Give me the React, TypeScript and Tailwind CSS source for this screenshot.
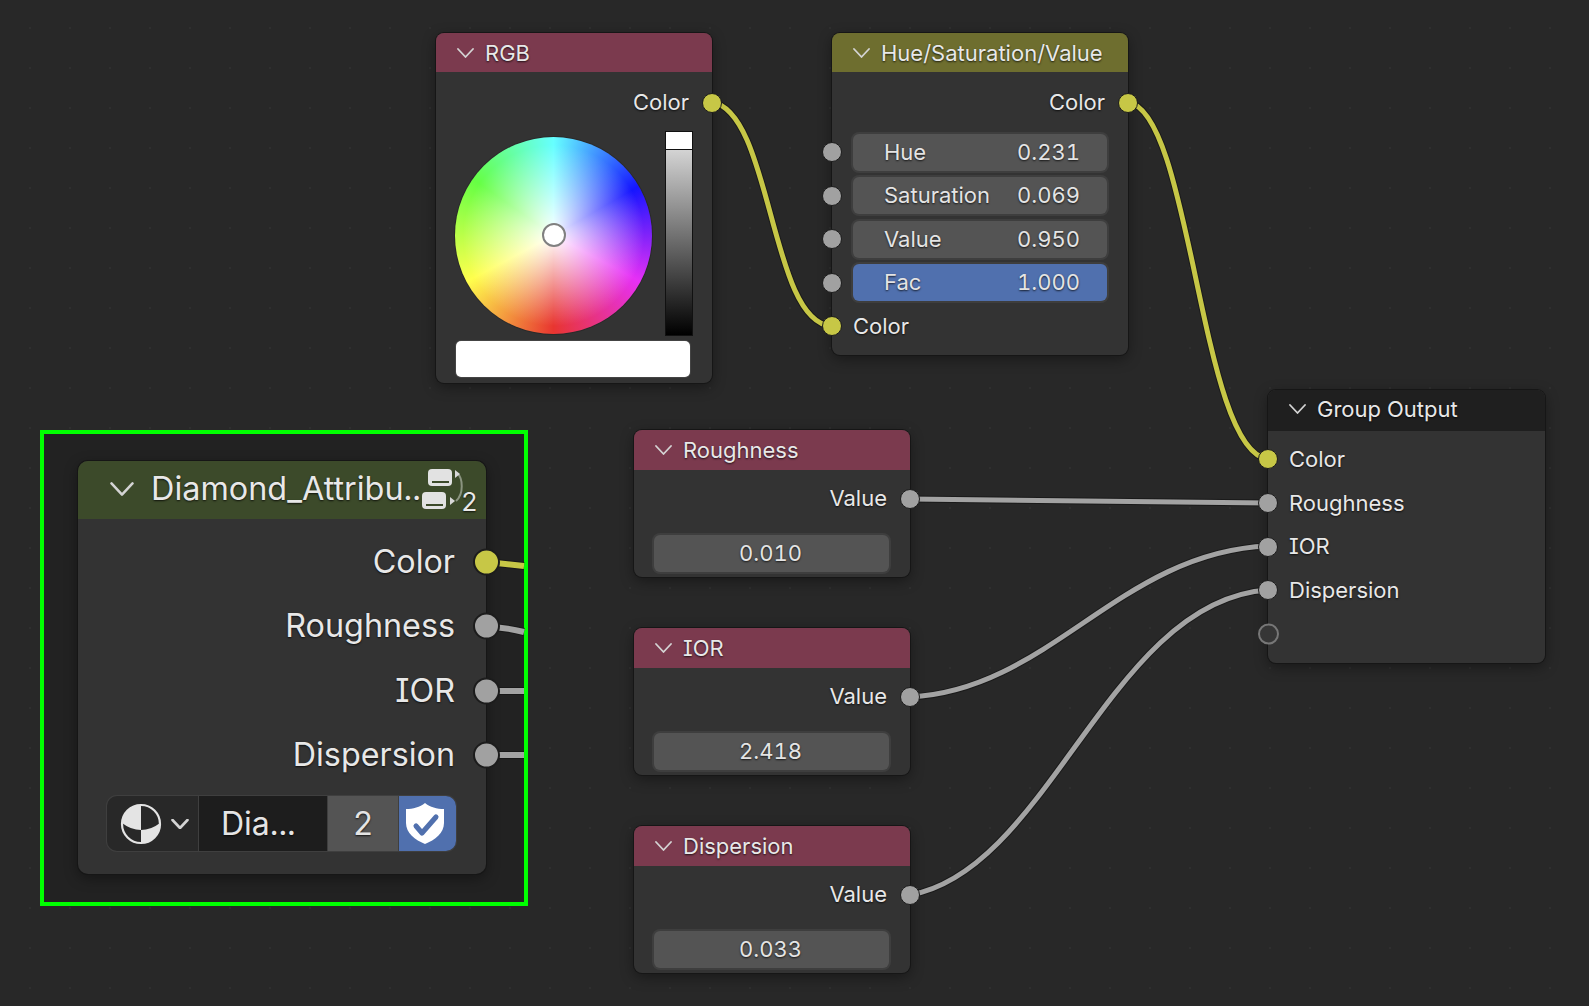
import React from 'react';

const textShadow = '[text-shadow:0_1px_2px_rgba(0,0,0,0.75)]';

function Chevron({ className, weight = 1.8 }: { className: string; weight?: number }) {
  return (
    <svg viewBox="0 0 17 10" fill="none" className={className}>
      <polyline points="1,1 8.5,9 16,1" stroke="#d4d4d4" strokeWidth={weight} strokeLinecap="round" strokeLinejoin="round" />
    </svg>
  );
}

function Socket({ side, yellow, big, empty }: { side: 'left' | 'right'; yellow?: boolean; big?: boolean; empty?: boolean }) {
  const pos = big
    ? 'w-[27px] h-[27px] -right-[14px] border-2 border-[#1c1c1c]'
    : side === 'left'
      ? 'w-[20px] h-[20px] -left-[10px] border border-[#1c1c1c]'
      : 'w-[20px] h-[20px] -right-[10px] border border-[#1c1c1c]';
  if (empty) {
    return <span className="absolute top-1/2 -left-[10px] -translate-y-1/2 w-[21px] h-[21px] rounded-full border-2 border-[#777777] bg-[#363636]" />;
  }
  return <span className={`absolute top-1/2 -translate-y-1/2 rounded-full ${pos} ${yellow ? 'bg-[#c7c746]' : 'bg-[#a1a1a1]'}`} />;
}

function Header({ title, className }: { title: string; className: string }) {
  return (
    <div className={`flex items-center pl-[21px] gap-[11px] rounded-t-[8px] ${className}`}>
      <Chevron className="w-[17px] h-[10px] shrink-0" />
      <span className={`text-[22px] leading-none text-[#e8e8e8] ${textShadow}`}>{title}</span>
    </div>
  );
}

function OutputRow({ label, yellow }: { label: string; yellow?: boolean }) {
  return (
    <div className={`relative flex items-center justify-end h-[43.5px] pr-[23px] text-[22px] text-[#e8e8e8] ${textShadow}`}>
      {label}
      <Socket side="right" yellow={yellow} />
    </div>
  );
}

function InputRow({ label, yellow, empty }: { label?: string; yellow?: boolean; empty?: boolean }) {
  return (
    <div className={`relative flex items-center h-[43.7px] pl-[21px] text-[22px] text-[#e8e8e8] ${textShadow}`}>
      {label}
      <Socket side="left" yellow={yellow} empty={empty} />
    </div>
  );
}

function SliderRow({ label, value, active }: { label: string; value: string; active?: boolean }) {
  return (
    <div className="relative flex items-center h-[43.5px] pl-[21px] pr-[21px]">
      <Socket side="left" />
      <div
        className={`flex items-center justify-between w-full h-[37px] pl-[31px] pr-[27px] rounded-[6px] text-[22px] text-[#e4e4e4] shadow-[0_0_0_2px_#3e3e3e] ${textShadow} ${
          active ? 'bg-[#5070ae]' : 'bg-[#545454]'
        }`}
      >
        <span>{label}</span>
        <span>{value}</span>
      </div>
    </div>
  );
}

function ValueNode({ title, value, className }: { title: string; value: string; className: string }) {
  return (
    <div className={`absolute left-[634px] w-[276px] h-[147px] rounded-[8px] bg-[#333333] shadow-[0_0_0_1px_#161616,0_4px_14px_rgba(0,0,0,0.4)] ${className}`}>
      <Header title={title} className="h-[40px] pb-[1px] bg-[#7b3a4e]" />
      <div className="pt-[7px]">
        <OutputRow label="Value" />
      </div>
      <div className={`flex items-center justify-center h-[37px] mt-[14px] ml-[20px] mr-[21px] pr-[2px] rounded-[6px] bg-[#545454] text-[22px] text-[#e4e4e4] shadow-[0_0_0_2px_#3e3e3e] ${textShadow}`}>
        {value}
      </div>
    </div>
  );
}

function BigOutput({ label, yellow }: { label: string; yellow?: boolean }) {
  return (
    <div className={`relative flex items-center justify-end h-[64.3px] pr-[31px] text-[32.3px] text-[#e8e8e8] ${textShadow}`}>
      {label}
      <Socket side="right" yellow={yellow} big />
    </div>
  );
}

function Wire({ d, yellow, width = 5 }: { d: string; yellow?: boolean; width?: number }) {
  return (
    <>
      <path d={d} fill="none" stroke="#161616" strokeOpacity="0.75" strokeWidth={width + 2} />
      <path d={d} fill="none" stroke={yellow ? '#c7c746' : '#a3a3a3'} strokeWidth={width} />
    </>
  );
}

export default function App() {
  return (
    <div
      className="relative w-[1589px] h-[1006px] overflow-hidden bg-[#282828] bg-[radial-gradient(circle,#2f2f2f_1px,transparent_1.5px)] bg-[length:40px_40px] bg-[position:10px_8px] [font-feature-settings:'cv08','tnum']"
      style={{ fontFamily: 'Inter, "Noto Sans", sans-serif' }}
    >
      {/* highlighted area behind the group node */}
      <div className="absolute left-[40px] top-[430px] w-[488px] h-[476px] border-4 border-[#00ff00] bg-[#222222]" />

      <svg className="absolute inset-0" width="1589" height="1006">
        <Wire yellow d="M712 102 C772 112, 770 322, 831 326" />
        <Wire yellow d="M1128 102 C1192 112, 1200 452, 1268 459" />
        <Wire d="M910 499 L1268 503" />
        <Wire d="M910 697 C1050 690, 1120 552, 1268 546" />
        <Wire d="M910 895 C1050 870, 1110 600, 1268 590" />
        <Wire yellow width={6} d="M487 562 L524 566" />
        <Wire width={6} d="M487 627 C500 627, 512 629, 524 632" />
        <Wire width={6} d="M487 691 L524 691" />
        <Wire width={6} d="M487 755 L524 755" />
      </svg>

      {/* RGB */}
      <div className="absolute left-[436px] top-[33px] w-[276px] h-[350px] rounded-[8px] bg-[#333333] shadow-[0_0_0_1px_#161616,0_4px_14px_rgba(0,0,0,0.4)]">
        <Header title="RGB" className="h-[39px] pt-[1px] bg-[#7b3a4e]" />
        <div className="pt-[9px]">
          <OutputRow label="Color" yellow />
        </div>
        <div className="flex mt-[6px] pl-[19px] h-[205px]">
          <div className="relative w-[197px] h-[197px] mt-[6px] rounded-full bg-[radial-gradient(circle_closest-side,#ffffff,#ffffff00_92%),conic-gradient(#66ffff,#1515ff_60deg,#e630f5_118deg,#e83530_180deg,#ffff4d_242deg,#66ff44_305deg,#66ffff)] shadow-[0_0_0_1px_#2a2a2a]">
            <span className="absolute left-1/2 top-1/2 -translate-x-1/2 -translate-y-1/2 w-[24px] h-[24px] rounded-full bg-white border-2 border-[#808080]" />
          </div>
          <div className="flex flex-col w-[28px] ml-[13px] border border-[#111111] bg-[linear-gradient(#e8e8e8,#000000)]">
            <div className="h-[18px] bg-white border-b border-[#111111]" />
          </div>
        </div>
        <div className="h-[36px] w-[234px] mt-[5px] ml-[20px] rounded-[5px] bg-white shadow-[0_0_0_1px_#444444]" />
      </div>

      {/* Hue/Saturation/Value */}
      <div className="absolute left-[832px] top-[33px] w-[296px] h-[322px] rounded-[8px] bg-[#333333] shadow-[0_0_0_1px_#161616,0_4px_14px_rgba(0,0,0,0.4)]">
        <Header title="Hue/Saturation/Value" className="h-[39px] pt-[1px] bg-[#6e6e2f]" />
        <div className="pt-[9px]">
          <OutputRow label="Color" yellow />
        </div>
        <div className="mt-[6px]">
          <SliderRow label="Hue" value="0.231" />
          <SliderRow label="Saturation" value="0.069" />
          <SliderRow label="Value" value="0.950" />
          <SliderRow label="Fac" value="1.000" active />
          <InputRow label="Color" yellow />
        </div>
      </div>

      {/* Value nodes */}
      <ValueNode title="Roughness" value="0.010" className="top-[430px]" />
      <ValueNode title="IOR" value="2.418" className="top-[628px]" />
      <ValueNode title="Dispersion" value="0.033" className="top-[826px]" />

      {/* Group Output */}
      <div className="absolute left-[1268px] top-[390px] w-[277px] h-[273px] rounded-[8px] bg-[#333333] shadow-[0_0_0_1px_#161616,0_4px_14px_rgba(0,0,0,0.4)]">
        <Header title="Group Output" className="h-[41px] pb-[3px] bg-[#1f1f1f]" />
        <div className="pt-[6.5px]">
          <InputRow label="Color" yellow />
          <InputRow label="Roughness" />
          <InputRow label="IOR" />
          <InputRow label="Dispersion" />
          <InputRow empty />
        </div>
      </div>

      {/* Diamond group node */}
      <div className="absolute left-[78px] top-[461px] w-[408px] h-[413px] rounded-[10px] bg-[#333333] shadow-[0_0_0_1px_#161616,0_4px_14px_rgba(0,0,0,0.4)]">
        <div className="relative flex items-center h-[58px] pb-[2px] pl-[31px] gap-[16px] rounded-t-[10px] bg-[#3c4a2a]">
          <Chevron className="w-[26px] h-[14px] shrink-0" />
          <span className={`text-[32.4px] leading-none text-[#e8e8e8] ${textShadow}`}>Diamond_Attribu..</span>
          <svg viewBox="0 0 44 44" fill="none" className="absolute left-[343px] top-[7px] w-[44px] h-[44px]">
            <rect x="7" y="1" width="24" height="17" rx="4" fill="#e2e2e2" />
            <rect x="11" y="13" width="17" height="2" fill="#3c4a2a" />
            <rect x="1" y="24" width="24" height="17" rx="4" fill="#e2e2e2" />
            <rect x="5" y="36" width="17" height="2" fill="#3c4a2a" />
            <path d="M36 5 C42 10, 43 26, 35 33" stroke="#8b9480" strokeWidth="2" />
            <polygon points="34,2 34,10 39,6" fill="#d8d8d8" />
            <polygon points="29,29 29,37 34,33" fill="#d8d8d8" />
          </svg>
          <span className={`absolute left-[383px] top-[28px] text-[26px] leading-none text-[#e8e8e8] ${textShadow}`}>2</span>
        </div>
        <div className="pt-[11px]">
          <BigOutput label="Color" yellow />
          <BigOutput label="Roughness" />
          <BigOutput label="IOR" />
          <BigOutput label="Dispersion" />
        </div>
        <div className="flex h-[55px] mt-[9px] ml-[29px] w-[349px] rounded-[10px] bg-[#282828] shadow-[0_0_0_1px_#3f3f3f] text-[32px] text-[#e4e4e4]">
          <div className="flex items-center w-[92px] pl-[13px] gap-[9px] border-r border-[#3f3f3f]">
            <svg viewBox="0 0 42 42" fill="none" className="w-[42px] h-[42px] shrink-0">
              <circle cx="21" cy="21" r="19" stroke="#e4e4e4" strokeWidth="2.2" />
              <path d="M21 2 A19 19 0 0 0 2 20 Q11 27 21 27 Z" fill="#e4e4e4" />
              <path d="M21 27 Q31 27 40 20 A19 19 0 0 1 21 40 Z" fill="#e4e4e4" />
            </svg>
            <Chevron className="w-[18px] h-[10px] shrink-0" weight={2.6} />
          </div>
          <div className={`flex items-center w-[128px] pl-[22px] bg-[#1d1d1d] ${textShadow}`}>Dia...</div>
          <div className={`flex items-center justify-center w-[71px] bg-[#545454] border-l border-[#3f3f3f] ${textShadow}`}>2</div>
          <div className="flex items-center flex-1 pl-[7px] rounded-r-[10px] bg-[#5070ae] border-l border-[#3f3f3f]">
            <svg viewBox="0 0 38 41" className="w-[38px] h-[41px]">
              <path d="M19 0 C24 4 31 6 38 6 L38 20 C38 30 29 37 19 41 C9 37 0 30 0 20 L0 6 C7 6 14 4 19 0 Z" fill="#ffffff" />
              <polyline points="10,23 16,30 30,14" fill="none" stroke="#5070ae" strokeWidth="5" strokeLinecap="round" strokeLinejoin="round" />
            </svg>
          </div>
        </div>
      </div>
    </div>
  );
}
